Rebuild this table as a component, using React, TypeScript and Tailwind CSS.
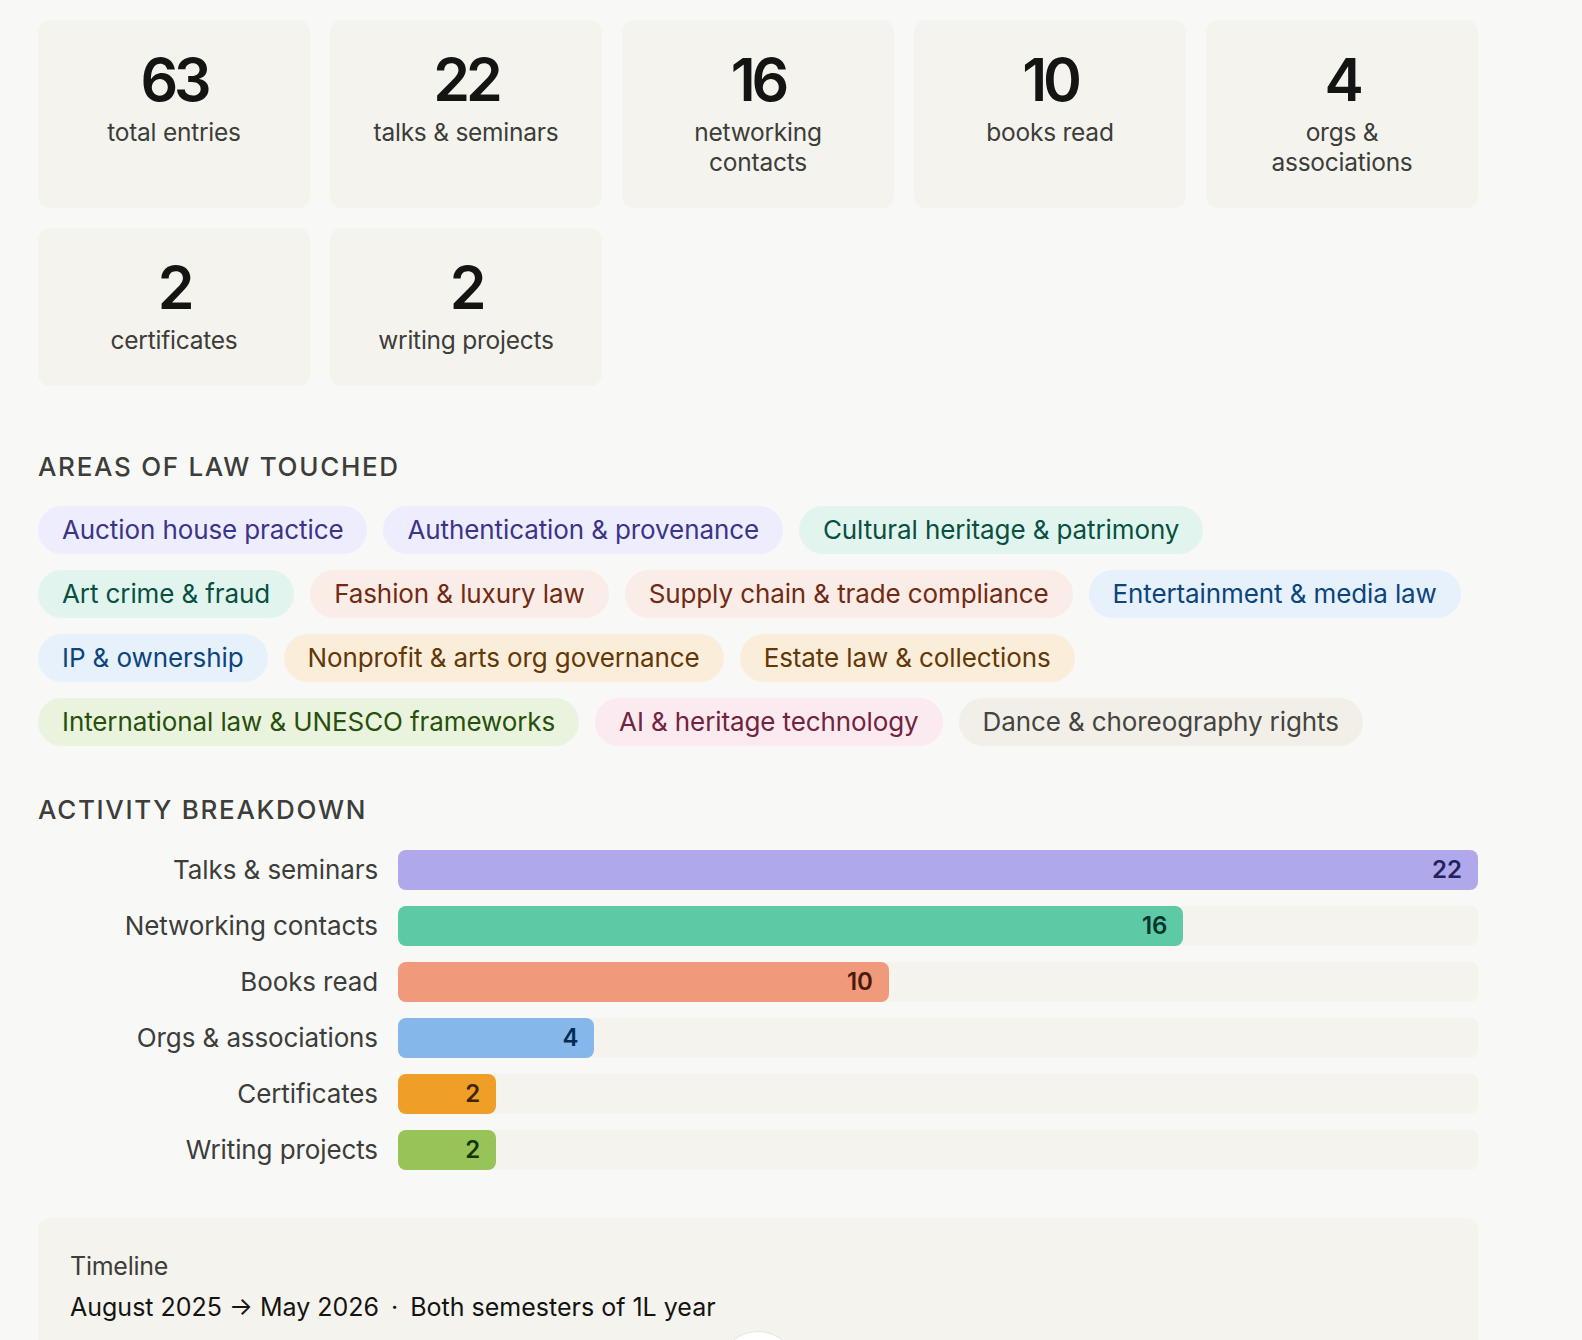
import React from "react";

const stats = [
  { n: "63", label: "total entries" },
  { n: "22", label: "talks & seminars" },
  { n: "16", label: "networking contacts" },
  { n: "10", label: "books read" },
  { n: "4", label: "orgs & associations" },
  { n: "2", label: "certificates" },
  { n: "2", label: "writing projects" },
];

type Tone = "purple" | "teal" | "coral" | "blue" | "amber" | "green" | "pink" | "gray";

const chipTone: Record<Tone, string> = {
  purple: "bg-[#EEEDFE] text-[#3C3489]",
  teal: "bg-[#E1F5EE] text-[#085041]",
  coral: "bg-[#FAECE7] text-[#712B13]",
  blue: "bg-[#E6F1FB] text-[#0C447C]",
  amber: "bg-[#FAEEDA] text-[#633806]",
  green: "bg-[#EAF3DE] text-[#27500A]",
  pink: "bg-[#FBEAF0] text-[#72243E]",
  gray: "bg-[#F1EFE8] text-[#444441]",
};

const chipRows: { t: string; tone: Tone }[][] = [
  [
    { t: "Auction house practice", tone: "purple" },
    { t: "Authentication & provenance", tone: "purple" },
    { t: "Cultural heritage & patrimony", tone: "teal" },
  ],
  [
    { t: "Art crime & fraud", tone: "teal" },
    { t: "Fashion & luxury law", tone: "coral" },
    { t: "Supply chain & trade compliance", tone: "coral" },
    { t: "Entertainment & media law", tone: "blue" },
  ],
  [
    { t: "IP & ownership", tone: "blue" },
    { t: "Nonprofit & arts org governance", tone: "amber" },
    { t: "Estate law & collections", tone: "amber" },
  ],
  [
    { t: "International law & UNESCO frameworks", tone: "green" },
    { t: "AI & heritage technology", tone: "pink" },
    { t: "Dance & choreography rights", tone: "gray" },
  ],
];

const bars = [
  { label: "Talks & seminars", v: 22, cls: "bg-[#AFA9EC] text-[#26215C]" },
  { label: "Networking contacts", v: 16, cls: "bg-[#5DCAA5] text-[#04342C]" },
  { label: "Books read", v: 10, cls: "bg-[#F0997B] text-[#4A1B0C]" },
  { label: "Orgs & associations", v: 4, cls: "bg-[#85B7EB] text-[#042C53]" },
  { label: "Certificates", v: 2, cls: "bg-[#EF9F27] text-[#412402]" },
  { label: "Writing projects", v: 2, cls: "bg-[#97C459] text-[#173404]" },
];

const max = 22;

export default function App() {
  return (
    <div
      className="min-h-screen bg-[#f8f8f6] px-[38px] pt-5 pb-10 text-[#141413]"
      style={{ fontFamily: "Inter, 'Noto Sans', sans-serif" }}
    >
      <div className="w-[1440px]">
        {/* Stat cards */}
        <div className="grid grid-cols-5 gap-5">
          {stats.map((s, i) => (
            <div
              key={i}
              className="flex flex-col items-center rounded-xl bg-[#f4f3ed] px-8 pt-[30px] pb-[31px] text-center"
            >
              <div className="text-[59px] leading-[60px] font-semibold tracking-[-0.07em] text-[#141413]">
                {s.n}
              </div>
              <div className="mt-[7px] text-[24.5px] leading-[30px] tracking-[-0.01em] text-[#3d3d3a]">
                {s.label}
              </div>
            </div>
          ))}
        </div>

        {/* Areas of law */}
        <h2 className="mt-[65px] mb-[23px] text-[26px] leading-[32px] font-medium uppercase tracking-[0.065em] text-[#3d3d3a]">
          Areas of law touched
        </h2>
        <div className="flex flex-col gap-4">
          {chipRows.map((row, ri) => (
            <div key={ri} className="flex gap-4">
              {row.map((c) => (
                <span
                  key={c.t}
                  className={`rounded-full px-6 py-2 text-[26px] leading-[32px] tracking-[-0.004em] whitespace-nowrap ${chipTone[c.tone]}`}
                >
                  {c.t}
                </span>
              ))}
            </div>
          ))}
        </div>

        {/* Activity breakdown */}
        <h2 className="mt-[48px] mb-[24px] text-[26px] leading-[32px] font-medium uppercase tracking-[0.065em] text-[#3d3d3a]">
          Activity breakdown
        </h2>
        <div className="flex flex-col gap-4">
          {bars.map((b) => (
            <div key={b.label} className="flex items-center gap-5">
              <div className="w-[340px] shrink-0 text-right text-[26px] leading-[32px] tracking-[-0.004em] text-[#3d3d3a]">
                {b.label}
              </div>
              <div className="h-10 flex-1 rounded-lg bg-[#f4f3ed]">
                <div
                  className={`flex h-10 items-center justify-end rounded-lg pr-4 text-[24px] font-semibold ${b.cls}`}
                  style={{ width: `${(b.v / max) * 100}%` }}
                >
                  {b.v}
                </div>
              </div>
            </div>
          ))}
        </div>

        {/* Timeline */}
        <div className="mt-12 rounded-xl bg-[#f4f3ed] px-8 pt-8 pb-10">
          <div className="text-[25px] leading-[32px] tracking-[-0.01em] text-[#3d3d3a]">Timeline</div>
          <div className="mt-[9px] text-[25px] leading-[32px] text-[#141413]">
            August 2025 → May 2026
            <span className="mx-3">·</span>
            Both semesters of 1L year
          </div>
          <div className="mt-2 flex justify-center">
            <div className="h-20 w-20 rounded-full border border-[#e6e4dc] bg-white" />
          </div>
        </div>
      </div>
    </div>
  );
}
